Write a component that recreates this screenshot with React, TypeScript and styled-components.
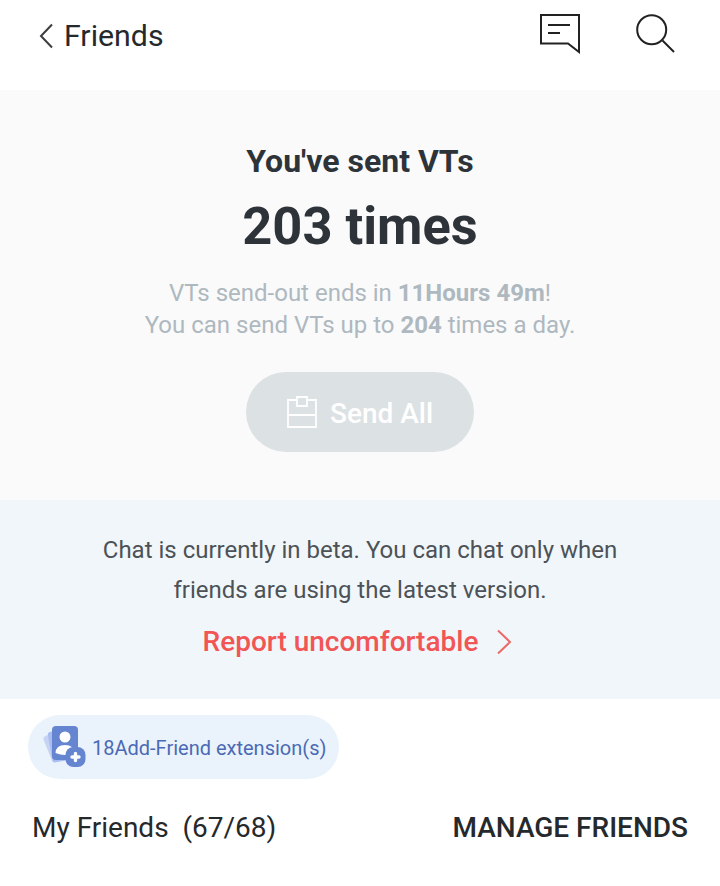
import React from "react";
import styled, { createGlobalStyle } from "styled-components";

const GlobalStyle = createGlobalStyle`
  html, body {
    margin: 0;
    padding: 0;
    background: #fff;
    font-family: Roboto, "Liberation Sans", sans-serif;
  }
`;

const Page = styled.div`
  width: 720px;
  height: 886px;
  overflow: hidden;
  display: flex;
  flex-direction: column;
`;

const Header = styled.header`
  height: 90px;
  display: flex;
  align-items: flex-start;
  justify-content: space-between;
  padding: 0 44px 0 39px;
  box-sizing: border-box;
`;

const BackLink = styled.div`
  display: flex;
  align-items: center;
  gap: 9px;
  height: 71px;
  font-size: 30.3px;
  color: #26292c;
`;

const HeaderIcons = styled.div`
  display: flex;
  align-items: flex-start;
  gap: 56px;
  padding-top: 14px;
`;

const SummaryPanel = styled.section`
  height: 410px;
  background: #fafafa;
  display: flex;
  flex-direction: column;
  align-items: center;
  padding-top: 52px;
  box-sizing: border-box;
`;

const Title = styled.h2`
  margin: 0;
  font-size: 32px;
  line-height: 38px;
  font-weight: 700;
  color: #2d3338;
`;

const Count = styled.div`
  margin-top: 16px;
  font-size: 52.4px;
  line-height: 60px;
  font-weight: 700;
  color: #2d3338;
`;

const Note = styled.p`
  margin: 21px 0 0;
  font-size: 24px;
  line-height: 32px;
  color: #aeb8bf;
  text-align: center;

  b {
    font-weight: 700;
  }
`;

const SendButton = styled.button`
  margin-top: 31px;
  width: 228px;
  height: 80px;
  border: 0;
  border-radius: 40px;
  background: #dce1e4;
  color: #fff;
  display: flex;
  align-items: center;
  justify-content: center;
  gap: 13px;
  font-family: inherit;
  font-size: 28px;
  font-weight: 500;
`;

const SendLabel = styled.span`
  padding-top: 2px;
`;

const BetaPanel = styled.section`
  height: 199px;
  background: #f1f6fa;
  display: flex;
  flex-direction: column;
  align-items: center;
  padding-top: 30px;
  box-sizing: border-box;
`;

const BetaText = styled.p`
  margin: 0;
  font-size: 24px;
  line-height: 40px;
  color: #4c5257;
  text-align: center;
`;

const ReportLink = styled.a`
  margin: 12px 0 0 -5px;
  display: flex;
  align-items: center;
  gap: 18px;
  font-size: 28px;
  line-height: 40px;
  font-weight: 500;
  color: #f25555;
`;

const ExtensionPill = styled.div`
  margin: 16px 0 0 28px;
  width: 311px;
  height: 64px;
  border-radius: 32px;
  background: #eaf3fb;
  display: flex;
  align-items: center;
  padding-left: 13px;
  gap: 5px;
  box-sizing: border-box;
  font-size: 20px;
  color: #4a6ab5;
`;

const PillLabel = styled.span`
  padding-top: 2px;
`;

const FriendsRow = styled.div`
  margin-top: 29px;
  padding: 0 32px;
  display: flex;
  justify-content: space-between;
  align-items: center;
  font-size: 28px;
  line-height: 40px;
  color: #26292c;
`;

const ManageLabel = styled.span`
  font-weight: 500;
  font-size: 28px;
`;

const ChevronLeft = () => (
  <svg width="16" height="26" viewBox="0 0 16 26" fill="none">
    <path d="M13 1.5 2 13l11 11.5" stroke="#3a3d40" strokeWidth="2" />
  </svg>
);

const MessageIcon = () => (
  <svg width="40" height="40" viewBox="0 0 40 40" fill="none" stroke="#222" strokeWidth="2">
    <path d="M1 1h38v37L28 29.5H1z" />
    <path d="M8 11h22M8 19h12" />
  </svg>
);

const SearchIcon = () => (
  <svg width="40" height="40" viewBox="0 0 40 40" fill="none" stroke="#222" strokeWidth="2">
    <circle cx="15.7" cy="15.7" r="14.5" />
    <path d="M26.5 26.5 38 38" />
  </svg>
);

const BoxIcon = () => (
  <svg width="30" height="32" viewBox="0 0 30 32" fill="none" stroke="#fff" strokeWidth="1.8">
    <path d="M10 4H1v27h28V4h-9M1 19h28" />
    <path d="M10 1h10v9H10z" />
  </svg>
);

const ChevronRight = () => (
  <svg width="16" height="26" viewBox="0 0 16 26" fill="none">
    <path d="M2 1.5 14 13 2 24.5" stroke="#ec6a66" strokeWidth="2" />
  </svg>
);

const AddFriendIcon = () => (
  <svg width="46" height="44" viewBox="0 0 46 44">
    <rect x="6" y="7" width="22" height="28" rx="3" fill="#c5d4f5" transform="rotate(-22 17 21)" />
    <rect x="9" y="5" width="24" height="31" rx="3" fill="#a9bdf0" transform="rotate(-10 21 21)" />
    <rect x="11" y="1" width="26" height="34" rx="4" fill="#6585d0" />
    <circle cx="24" cy="12" r="5.5" fill="#fff" />
    <path d="M14.5 28q.5-8 9.5-8t9.5 8q-9.500 4-19 0z" fill="#fff" />
    <rect x="24.5" y="22" width="20" height="20" rx="8" fill="#6585d0" />
    <path d="M34.500 28.500v7M31 32h7" stroke="#fff" strokeWidth="3.400" strokeLinecap="round" />
  </svg>
);

const App: React.FC = () => {
  return (
    <Page>
      <GlobalStyle />
      <Header>
        <BackLink>
          <ChevronLeft />
          Friends
        </BackLink>
        <HeaderIcons>
          <MessageIcon />
          <SearchIcon />
        </HeaderIcons>
      </Header>
      <SummaryPanel>
        <Title>You've sent VTs</Title>
        <Count>203 times</Count>
        <Note>
          VTs send-out ends in <b>11Hours 49m</b>!
          <br />
          You can send VTs up to <b>204</b> times a day.
        </Note>
        <SendButton>
          <BoxIcon />
          <SendLabel>Send All</SendLabel>
        </SendButton>
      </SummaryPanel>
      <BetaPanel>
        <BetaText>
          Chat is currently in beta. You can chat only when
          <br />
          friends are using the latest version.
        </BetaText>
        <ReportLink>
          Report uncomfortable
          <ChevronRight />
        </ReportLink>
      </BetaPanel>
      <ExtensionPill>
        <AddFriendIcon />
        <PillLabel>18Add-Friend extension(s)</PillLabel>
      </ExtensionPill>
      <FriendsRow>
        <span>My Friends&nbsp; (67/68)</span>
        <ManageLabel>MANAGE FRIENDS</ManageLabel>
      </FriendsRow>
    </Page>
  );
};

export default App;
